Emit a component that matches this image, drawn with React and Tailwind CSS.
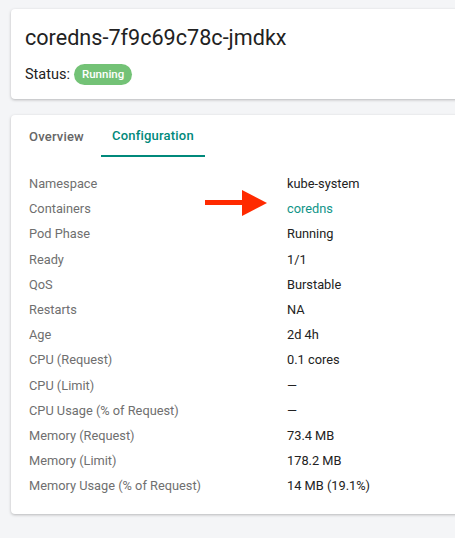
import React from "react";

const rows = [
  ["Namespace", "kube-system"],
  ["Containers", "coredns", true],
  ["Pod Phase", "Running"],
  ["Ready", "1/1"],
  ["QoS", "Burstable"],
  ["Restarts", "NA"],
  ["Age", "2d 4h"],
  ["CPU (Request)", "0.1 cores"],
  ["CPU (Limit)", "—"],
  ["CPU Usage (% of Request)", "—"],
  ["Memory (Request)", "73.4 MB"],
  ["Memory (Limit)", "178.2 MB"],
  ["Memory Usage (% of Request)", "14 MB (19.1%)"],
];

const Arrow = () => (
  <svg width="64" height="28" viewBox="0 0 64 28" className="absolute left-[-82px] top-[-9px]">
    <rect x="0" y="10" width="40" height="5" fill="#ff2a00" />
    <polygon points="37,0 62,13 37,26" fill="#ff2a00" />
  </svg>
);

export default function App() {
  return (
    <div className="min-h-screen bg-[#f4f5f7] pt-[9px] pl-[11px] overflow-hidden" style={{ fontFamily: "Roboto, 'Liberation Sans', sans-serif" }}>
      {/* header card */}
      <div className="w-[470px] h-[90px] bg-white rounded-[4px] shadow-[0_1px_3px_rgba(0,0,0,0.25)] pl-[14px] pt-[14px]">
        <h1 className="text-[21.6px] leading-[30px] text-[#222]">coredns-7f9c69c78c-jmdkx</h1>
        <div className="flex items-center gap-[4px] mt-[11px] text-[14.5px] text-[#222]">
          <span>Status:</span>
          <span className="bg-[#73c276] text-white text-[11.5px] font-medium rounded-full h-[21px] px-[8px] flex items-center">Running</span>
        </div>
      </div>

      {/* details card */}
      <div className="w-[470px] mt-[16px] bg-white rounded-[4px] shadow-[0_1px_3px_rgba(0,0,0,0.25)] pb-[16px]">
        <div className="flex pl-[7px] pt-[2px] h-[42px]">
          <div className="pl-[11px] pr-[17px] flex items-center text-[13px] font-medium text-[#666] tracking-[0.2px]">Overview</div>
          <div className="px-[11px] flex items-center text-[13px] font-medium text-[#00897b] border-b-2 border-[#00897b] tracking-[0.2px]">Configuration</div>
        </div>
        <div className="pl-[18px] pt-[14px]">
          {rows.map(([label, value, link]) => (
            <div key={label} className="flex h-[25.2px] items-center text-[12.8px]">
              <div className="w-[258px] text-[#6f6f6f]">{label}</div>
              <div className={`relative ${link ? "text-[#0f9488]" : "text-[#222]"}`}>
                {link && <Arrow />}
                {value}
              </div>
            </div>
          ))}
        </div>
      </div>
    </div>
  );
}
